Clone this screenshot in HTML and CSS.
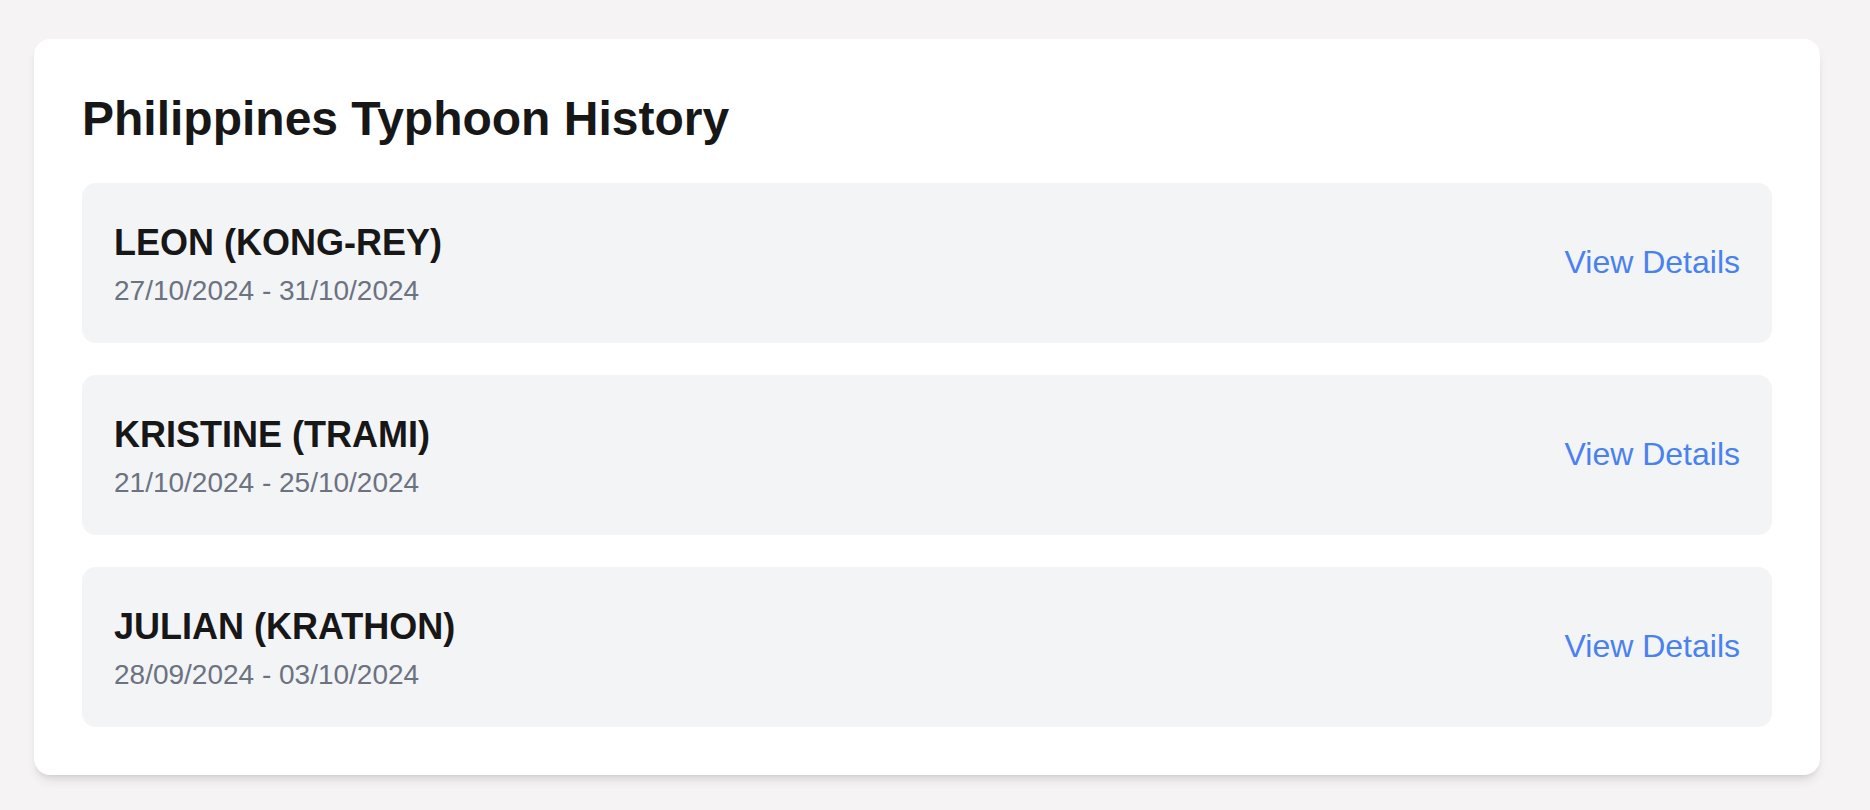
FILE: index.html
```html
<!DOCTYPE html>
<html lang="en">
<head>
<meta charset="utf-8">
<title>Philippines Typhoon History</title>
<link rel="stylesheet" href="styles.css">
</head>
<body>
  <main class="page">
    <section class="card">
      <h1 class="card-title">Philippines Typhoon History</h1>
      <ul class="storm-list">
        <li class="storm">
          <div class="storm-info">
            <h2 class="storm-name">LEON (KONG-REY)</h2>
            <p class="storm-dates">27/10/2024 - 31/10/2024</p>
          </div>
          <a class="storm-link" href="#">View Details</a>
        </li>
        <li class="storm">
          <div class="storm-info">
            <h2 class="storm-name">KRISTINE (TRAMI)</h2>
            <p class="storm-dates">21/10/2024 - 25/10/2024</p>
          </div>
          <a class="storm-link" href="#">View Details</a>
        </li>
        <li class="storm">
          <div class="storm-info">
            <h2 class="storm-name">JULIAN (KRATHON)</h2>
            <p class="storm-dates">28/09/2024 - 03/10/2024</p>
          </div>
          <a class="storm-link" href="#">View Details</a>
        </li>
      </ul>
    </section>
  </main>
</body>
</html>
```

FILE: styles.css
```css
* {
  box-sizing: border-box;
}

html, body {
  margin: 0;
  padding: 0;
}

body {
  background: #f5f3f4;
  font-family: "Liberation Sans", Arial, Helvetica, sans-serif;
  color: #171717;
  width: 1870px;
  height: 810px;
  overflow: hidden;
}

.page {
  padding: 39px 50px 0 34px;
}

.card {
  background: #ffffff;
  border-radius: 16px;
  padding: 48px;
  box-shadow: 0 8px 12px -4px rgba(0, 0, 0, 0.12), 0 3px 6px -3px rgba(0, 0, 0, 0.10);
}

.card-title {
  margin: 0 0 32px 0;
  font-size: 48px;
  line-height: 64px;
  font-weight: 700;
  color: #171717;
}

.storm-list {
  list-style: none;
  margin: 0;
  padding: 0;
  display: flex;
  flex-direction: column;
  gap: 32px;
}

.storm {
  display: flex;
  align-items: center;
  justify-content: space-between;
  background: #f3f4f6;
  border-radius: 14px;
  padding: 32px;
  height: 160px;
}

.storm-info {
  display: flex;
  flex-direction: column;
}

.storm-name {
  margin: 0;
  font-size: 36px;
  line-height: 56px;
  font-weight: 700;
  color: #171717;
}

.storm-dates {
  margin: 0;
  font-size: 28px;
  line-height: 40px;
  color: #6b7280;
}

.storm-link {
  font-size: 32px;
  line-height: 44px;
  color: #4a81f0;
  text-decoration: none;
  margin-bottom: 2px;
}
```
